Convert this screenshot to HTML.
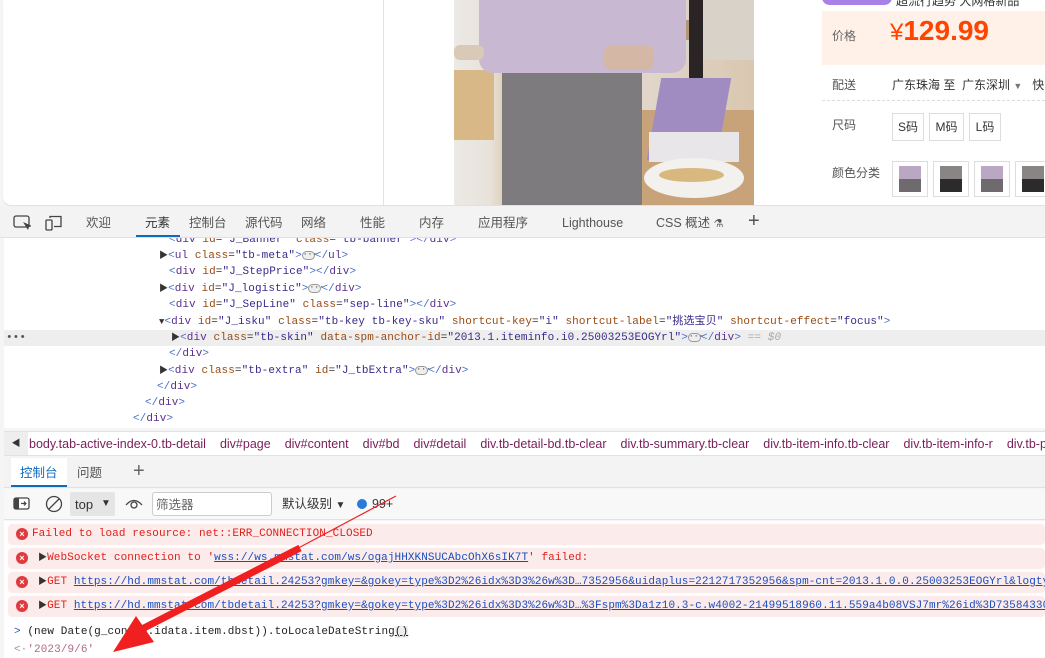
<!DOCTYPE html>
<html><head><meta charset="utf-8"><style>
*{margin:0;padding:0;box-sizing:border-box}
body{width:1045px;height:658px;overflow:hidden;background:#f5f5f5;font-family:"Liberation Sans","Noto Sans CJK SC",sans-serif;position:relative;font-size:12px;color:#333}
.abs{position:absolute}
.mono{font-family:"Liberation Mono","Noto Sans CJK SC",monospace;font-size:11px;letter-spacing:0.08px;white-space:pre}
.tg{color:#5b2e8f}.br{color:#4a6fc9}.an{color:#9a4a12}.av{color:#3a2a8a}
.row{position:absolute;height:16px;line-height:16px}
.ell{display:inline-block;width:13px;height:9px;border:1px solid #999;border-radius:5px;background:#eee;vertical-align:middle;font-size:8px;line-height:5px;text-align:center;color:#333}
.tri{font-size:9px;color:#333}
.err{position:absolute;left:8px;right:0;height:21px;background:#fcebeb;border-radius:4px;color:#e0201b;line-height:21px}
.ei{position:absolute;left:8px;top:4px;width:12px;height:12px;border-radius:50%;background:#e0393e;color:#fff;font-size:9px;line-height:12px;text-align:center;font-family:"Liberation Sans",sans-serif;font-weight:bold}
.lk{color:#1a4ebd;text-decoration:underline}
.tab{position:absolute;top:215px;font-size:12.5px;line-height:16px;color:#555;white-space:nowrap}
.bc span{margin-right:14px}
</style></head><body>
<div class="abs" style="left:3px;top:0;width:1042px;height:205px;background:#fff;border-radius:0 0 0 8px;box-shadow:0 1px 1px #ddd"></div>
<div class="abs" style="left:383px;top:0;width:1px;height:205px;background:#e3e3e3"></div>
<!-- photo -->
<div class="abs" style="left:454px;top:0;width:300px;height:205px;background:linear-gradient(90deg,#ece9e6 0,#e8e2da 12%,#d8c3a3 20%,#e2d8cc 60%,#d9c7b0 100%);overflow:hidden">
 <div class="abs" style="left:0;top:70px;width:40px;height:70px;background:#d9b888"></div>
 <div class="abs" style="left:160px;top:0;width:146px;height:60px;background:#d8d2c8"></div>
 <div class="abs" style="left:235px;top:0;width:14px;height:90px;background:#2a2424"></div>
 <div class="abs" style="left:175px;top:20px;width:60px;height:20px;background:#b09878"></div>
 <div class="abs" style="left:160px;top:110px;width:140px;height:95px;background:#c8a37a"></div>
 <div class="abs" style="left:200px;top:78px;width:70px;height:82px;background:#a08cc0;transform:skewX(-10deg)"></div>
 <div class="abs" style="left:195px;top:132px;width:90px;height:30px;background:#e9e6ea"></div>
 <div class="abs" style="left:190px;top:158px;width:100px;height:40px;background:#f3f1ee;border-radius:50%"></div>
 <div class="abs" style="left:205px;top:168px;width:65px;height:14px;background:#d9b880;border-radius:50%"></div>
 <div class="abs" style="left:48px;top:70px;width:140px;height:135px;background:#7d7b7e"></div>
 <div class="abs" style="left:25px;top:0;width:207px;height:73px;background:#c8b8d2;border-radius:0 0 14px 14px"></div>
 <div class="abs" style="left:0;top:45px;width:30px;height:15px;background:#dac9b6;border-radius:6px"></div>
 <div class="abs" style="left:150px;top:45px;width:50px;height:25px;background:#d5b7a6;border-radius:8px"></div>
</div>
<!-- right product panel -->
<div class="abs" style="left:822px;top:-10px;width:70px;height:15px;background:#a780e8;border-radius:8px"></div>
<div class="abs" style="left:896px;top:-8px;font-size:12px;color:#333">超流行趋势 大网格新品</div>
<div class="abs" style="left:822px;top:11px;width:223px;height:54px;background:#fff0e8"></div>
<div class="abs" style="left:832px;top:27px;font-size:12px;color:#666">价格</div>
<div class="abs" style="left:890px;top:15px;font-size:28px;color:#ff4400;font-weight:bold;white-space:nowrap"><span style="font-weight:normal;font-size:24px">¥</span>129.99</div>
<div class="abs" style="left:832px;top:76px;font-size:12px;color:#555">配送</div>
<div class="abs" style="left:892px;top:76px;font-size:12px;color:#333;white-space:nowrap">广东珠海 至&nbsp; 广东深圳 <span style="color:#777;font-size:9px">▼</span> &nbsp; 快</div>
<div class="abs" style="left:822px;top:100px;width:223px;border-top:1px dashed #ddd"></div>
<div class="abs" style="left:832px;top:116px;font-size:12px;color:#555">尺码</div>
<div class="abs" style="left:892px;top:113px;width:32px;height:28px;border:1px solid #ddd;line-height:26px;text-align:center;font-size:12px">S码</div>
<div class="abs" style="left:929px;top:113px;width:35px;height:28px;border:1px solid #ddd;line-height:26px;text-align:center;font-size:12px">M码</div>
<div class="abs" style="left:969px;top:113px;width:32px;height:28px;border:1px solid #ddd;line-height:26px;text-align:center;font-size:12px">L码</div>
<div class="abs" style="left:832px;top:164px;font-size:12px;color:#555">颜色分类</div>
<div class="abs" style="left:892px;top:161px;width:36px;height:36px;border:1px solid #ddd;padding:4px 6px"><div style="width:100%;height:100%;background:linear-gradient(#b9a7c4 50%,#6f6a6e 50%)"></div></div>
<div class="abs" style="left:933px;top:161px;width:36px;height:36px;border:1px solid #ddd;padding:4px 6px"><div style="width:100%;height:100%;background:linear-gradient(#8a8585 50%,#2b2b2b 50%)"></div></div>
<div class="abs" style="left:974px;top:161px;width:36px;height:36px;border:1px solid #ddd;padding:4px 6px"><div style="width:100%;height:100%;background:linear-gradient(#b9a7c4 50%,#6f6a6e 50%)"></div></div>
<div class="abs" style="left:1015px;top:161px;width:36px;height:36px;border:1px solid #ddd;padding:4px 6px"><div style="width:100%;height:100%;background:linear-gradient(#8a8585 50%,#2b2b2b 50%)"></div></div>

<!-- devtools tabbar -->
<div class="abs" style="left:0;top:206px;width:1045px;height:32px;background:#f3f3f3;border-bottom:1px solid #e0e0e0"></div>
<svg class="abs" style="left:13px;top:215px" width="18" height="16"><rect x="1" y="1" width="15" height="11" rx="2" fill="none" stroke="#444" stroke-width="1.3"/><path d="M10 7l5 8 1-3 3-1z" fill="#444"/></svg>
<svg class="abs" style="left:45px;top:215px" width="18" height="16"><rect x="1" y="5" width="6" height="10" rx="1" fill="none" stroke="#444" stroke-width="1.3"/><path d="M5 3V1.5h11v10H9" fill="none" stroke="#444" stroke-width="1.3"/></svg>
<div class="tab" style="left:86px">欢迎</div>
<div class="tab" style="left:145px;color:#333">元素</div>
<div class="abs" style="top:235px;left:136px;width:44px;height:2px;background:#0f6cbd"></div>
<div class="tab" style="left:189px">控制台</div>
<div class="tab" style="left:245px">源代码</div>
<div class="tab" style="left:301px">网络</div>
<div class="tab" style="left:360px">性能</div>
<div class="tab" style="left:419px">内存</div>
<div class="tab" style="left:478px">应用程序</div>
<div class="tab" style="left:562px">Lighthouse</div>
<div class="tab" style="left:656px">CSS 概述 <span style="font-size:11px">⚗</span></div>
<div class="abs" style="top:209px;left:748px;font-size:20px;line-height:24px;color:#555">+</div>

<!-- elements panel -->
<div class="abs" style="left:4px;top:238px;width:1041px;height:190px;background:#fff;overflow:hidden">
<div class="abs" style="left:0;top:92px;width:1041px;height:16px;background:#eeeeee"></div>
<div class="row mono" style="top:-6px;left:165px"><span class="br">&lt;</span><span class="tg">div</span> <span class="an">id</span>=<span class="av">"J_Banner"</span> <span class="an">class</span>=<span class="av">"tb-banner"</span><span class="br">&gt;&lt;/</span><span class="tg">div</span><span class="br">&gt;</span></div>
<div class="row mono" style="top:10px;left:155px"><span class="tri">▶</span><span class="br">&lt;</span><span class="tg">ul</span> <span class="an">class</span>=<span class="av">"tb-meta"</span><span class="br">&gt;</span><span class="ell">···</span><span class="br">&lt;/</span><span class="tg">ul</span><span class="br">&gt;</span></div>
<div class="row mono" style="top:26px;left:165px"><span class="br">&lt;</span><span class="tg">div</span> <span class="an">id</span>=<span class="av">"J_StepPrice"</span><span class="br">&gt;&lt;/</span><span class="tg">div</span><span class="br">&gt;</span></div>
<div class="row mono" style="top:43px;left:155px"><span class="tri">▶</span><span class="br">&lt;</span><span class="tg">div</span> <span class="an">id</span>=<span class="av">"J_logistic"</span><span class="br">&gt;</span><span class="ell">···</span><span class="br">&lt;/</span><span class="tg">div</span><span class="br">&gt;</span></div>
<div class="row mono" style="top:59px;left:165px"><span class="br">&lt;</span><span class="tg">div</span> <span class="an">id</span>=<span class="av">"J_SepLine"</span> <span class="an">class</span>=<span class="av">"sep-line"</span><span class="br">&gt;&lt;/</span><span class="tg">div</span><span class="br">&gt;</span></div>
<div class="row mono" style="top:76px;left:155px"><span class="tri">▼</span><span class="br">&lt;</span><span class="tg">div</span> <span class="an">id</span>=<span class="av">"J_isku"</span> <span class="an">class</span>=<span class="av">"tb-key tb-key-sku"</span> <span class="an">shortcut-key</span>=<span class="av">"i"</span> <span class="an">shortcut-label</span>=<span class="av">"挑选宝贝"</span> <span class="an">shortcut-effect</span>=<span class="av">"focus"</span><span class="br">&gt;</span></div>
<div class="row mono" style="top:92px;left:2px;color:#555">•••</div>
<div class="row mono" style="top:92px;left:167px"><span class="tri">▶</span><span class="br">&lt;</span><span class="tg">div</span> <span class="an">class</span>=<span class="av">"tb-skin"</span> <span class="an">data-spm-anchor-id</span>=<span class="av">"2013.1.iteminfo.i0.25003253EOGYrl"</span><span class="br">&gt;</span><span class="ell">···</span><span class="br">&lt;/</span><span class="tg">div</span><span class="br">&gt;</span> <span style="color:#aaa">== <i>$0</i></span></div>
<div class="row mono" style="top:108px;left:165px"><span class="br">&lt;/</span><span class="tg">div</span><span class="br">&gt;</span></div>
<div class="row mono" style="top:125px;left:155px"><span class="tri">▶</span><span class="br">&lt;</span><span class="tg">div</span> <span class="an">class</span>=<span class="av">"tb-extra"</span> <span class="an">id</span>=<span class="av">"J_tbExtra"</span><span class="br">&gt;</span><span class="ell">···</span><span class="br">&lt;/</span><span class="tg">div</span><span class="br">&gt;</span></div>
<div class="row mono" style="top:141px;left:153px"><span class="br">&lt;/</span><span class="tg">div</span><span class="br">&gt;</span></div>
<div class="row mono" style="top:157px;left:141px"><span class="br">&lt;/</span><span class="tg">div</span><span class="br">&gt;</span></div>
<div class="row mono" style="top:173px;left:129px"><span class="br">&lt;/</span><span class="tg">div</span><span class="br">&gt;</span></div>
</div>
<!-- breadcrumb -->
<div class="abs" style="left:4px;top:431px;width:1041px;height:25px;background:#fff;border-top:1px solid #dbe3f0;border-bottom:1px solid #dbe3f0"></div>
<div class="abs" style="left:4px;top:432px;width:24px;height:23px;background:#eee;font-size:9px;line-height:23px;text-align:center;color:#333">◀</div>
<div class="abs bc" style="left:29px;top:436px;font-size:12.5px;line-height:16px;color:#7a1e5a;white-space:nowrap"><span>body.tab-active-index-0.tb-detail</span><span>div#page</span><span>div#content</span><span>div#bd</span><span>div#detail</span><span>div.tb-detail-bd.tb-clear</span><span>div.tb-summary.tb-clear</span><span>div.tb-item-info.tb-clear</span><span>div.tb-item-info-r</span><span>div.tb-p</span></div>
<!-- drawer tabs -->
<div class="abs" style="left:4px;top:457px;width:1041px;height:31px;background:#f3f3f3;border-bottom:1px solid #e0e0e0"></div>
<div class="abs" style="left:11px;top:458px;width:56px;height:29px;background:#fff"></div>
<div class="abs" style="left:20px;top:465px;font-size:12.5px;line-height:16px;color:#0f6cbd">控制台</div>
<div class="abs" style="left:11px;top:485px;width:56px;height:2px;background:#0f6cbd"></div>
<div class="abs" style="left:77px;top:465px;font-size:12.5px;line-height:16px;color:#555">问题</div>
<div class="abs" style="left:133px;top:459px;font-size:20px;line-height:24px;color:#666">+</div>
<!-- console toolbar -->
<div class="abs" style="left:4px;top:489px;width:1041px;height:31px;background:#f8f8f8;border-bottom:1px solid #dbe3f0"></div>
<svg class="abs" style="left:13px;top:497px" width="18" height="14"><rect x="1" y="1" width="15" height="11" rx="2" fill="#fff" stroke="#444" stroke-width="1.3"/><rect x="1" y="1" width="5" height="11" fill="#444"/><path d="M8 6.5h5M11 4.5l2 2-2 2" stroke="#444" stroke-width="1.2" fill="none"/></svg>
<svg class="abs" style="left:45px;top:495px" width="18" height="18"><circle cx="9" cy="9" r="7.5" fill="none" stroke="#444" stroke-width="1.3"/><path d="M4 14L14 4" stroke="#444" stroke-width="1.3"/></svg>
<div class="abs" style="left:70px;top:492px;width:45px;height:24px;background:#e5e5e5;border-radius:2px"></div>
<div class="abs" style="left:75px;top:497px;font-size:13px;line-height:16px;color:#333">top</div>
<div class="abs" style="left:101px;top:497px;font-size:10px;line-height:14px;color:#333">▼</div>
<svg class="abs" style="left:125px;top:498px" width="18" height="12"><path d="M1 7Q9-2 17 7" fill="none" stroke="#444" stroke-width="1.3"/><circle cx="9" cy="7" r="3" fill="none" stroke="#444" stroke-width="1.3"/></svg>
<div class="abs" style="left:152px;top:492px;width:120px;height:24px;background:#fff;border:1px solid #ccc;border-radius:3px"></div>
<div class="abs" style="left:156px;top:497px;font-size:12.5px;line-height:16px;color:#666">筛选器</div>
<div class="abs" style="left:282px;top:496px;font-size:12.5px;line-height:16px;color:#333;white-space:nowrap">默认级别 <span style="font-size:10px">▼</span></div>
<div class="abs" style="left:357px;top:499px;width:10px;height:10px;border-radius:50%;background:#2a7ad8"></div>
<div class="abs" style="left:372px;top:496px;font-size:12.5px;line-height:16px;color:#333">99+</div>
<!-- console messages -->
<div class="abs" style="left:4px;top:521px;width:1041px;height:137px;background:#fff"></div>
<div class="err mono" style="top:524px"><span class="ei">×</span><span style="position:absolute;left:24px">Failed to load resource: net::ERR_CONNECTION_CLOSED</span></div>
<div class="err mono" style="top:548px"><span class="ei">×</span><span style="position:absolute;left:30px"><span class="tri" style="color:#333">▶</span>WebSocket connection to '<span class="lk">wss://ws.mmstat.com/ws/ogajHHXKNSUCAbcOhX6sIK7T</span>' failed:</span></div>
<div class="err mono" style="top:572px"><span class="ei">×</span><span style="position:absolute;left:30px"><span class="tri" style="color:#333">▶</span>GET <span class="lk">https://hd.mmstat.com/tbdetail.24253?gmkey=&amp;gokey=type%3D2%26idx%3D3%26w%3D…7352956&amp;uidaplus=2212717352956&amp;spm-cnt=2013.1.0.0.25003253EOGYrl&amp;logtype</span></span></div>
<div class="err mono" style="top:596px"><span class="ei">×</span><span style="position:absolute;left:30px"><span class="tri" style="color:#333">▶</span>GET <span class="lk">https://hd.mmstat.com/tbdetail.24253?gmkey=&amp;gokey=type%3D2%26idx%3D3%26w%3D…%3Fspm%3Da1z10.3-c.w4002-21499518960.11.559a4b08VSJ7mr%26id%3D735843300</span></span></div>
<div class="abs mono" style="left:14px;top:625px;line-height:14px;color:#222"><span style="color:#1a5fd0">&gt;</span> (new Date(g_config.idata.item.dbst)).toLocaleDateString<span style="text-decoration:underline;background:#eee">()</span></div>
<div class="abs mono" style="left:14px;top:643px;line-height:14px;color:#b2698a"><span style="color:#999">&lt;·</span>'2023/9/6'</div>
<svg class="abs" style="left:0;top:0" width="1045" height="658"><path d="M396 496L150 627" stroke="#f02020" stroke-width="1.2"/><path d="M300 548L140 630" stroke="#f02020" stroke-width="7"/><path d="M113 652L136 616L154 642Z" fill="#f02020"/></svg>
</body></html>
